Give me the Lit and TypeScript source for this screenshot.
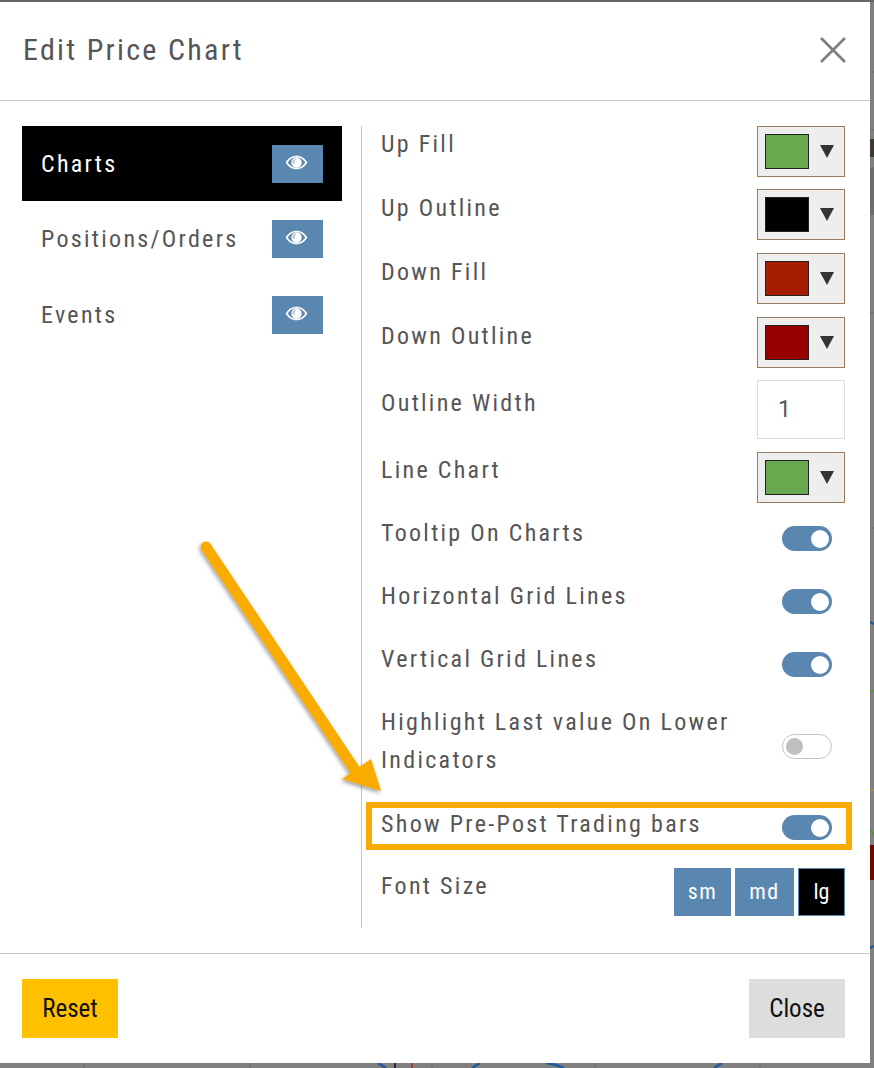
import { LitElement, html, css, svg } from "lit";
import { customElement } from "lit/decorators.js";

const eye = html`<svg class="eye" viewBox="0 0 24 16" aria-hidden="true">
  <path fill="#fff" fill-rule="evenodd" d="M12 .8C7 .8 3 3.500 .4 8 3 12.500 7 15.200 12 15.200s9-2.700 11.600-7.200C21 3.500 17 .8 12 .8zM12 2.300c-3.800 0-7 1.900-9.400 5.700 2.400 3.800 5.600 5.700 9.400 5.700s7-1.900 9.400-5.700C19 4.200 15.800 2.300 12 2.300z"/>
  <circle cx="12" cy="8" r="5.500" fill="#fff"/>
  <path fill="#9fb9d2" d="M7.800 7.800c0-2.200 1.700-3.900 4-3.900-1 1-2.200 2.200-2.200 4 0 .7.200 1.200.5 1.700-1.300 0-2.300-.7-2.300-1.800z"/>
</svg>`;

const swatch = (c: string) => html`<div class="picker"><span class="chip" style="background:${c}"></span><span class="caret"></span></div>`;
const toggle = (on = true, top = 11) => html`<span class="toggle ${on ? "on" : "off"}" style="margin-top:${top}px"><span class="knob"></span></span>`;

const rows = [
  { label: "Up Fill", h: 63, dy: -1, ctl: swatch("#6aa84f") },
  { label: "Up Outline", h: 64, dy: 0, ctl: swatch("#000000") },
  { label: "Down Fill", h: 64, dy: 0, ctl: swatch("#a61c00") },
  { label: "Down Outline", h: 63, dy: 0, ctl: swatch("#980000") },
  { label: "Outline Width", h: 72, dy: 4, ctl: html`<div class="input">1</div>` },
  { label: "Line Chart", h: 63, dy: -1, ctl: swatch("#6aa84f") },
  { label: "Tooltip On Charts", h: 63, dy: -1, ctl: toggle() },
  { label: "Horizontal Grid Lines", h: 63, dy: -1, ctl: toggle() },
  { label: "Vertical Grid Lines", h: 63, dy: -1, ctl: toggle() },
  { label: "Highlight Last value On Lower Indicators", h: 101, dy: -1, ctl: toggle(false, 30) },
  { label: "Show Pre-Post Trading bars", h: 63, dy: 0, ctl: toggle(true, 10) },
];

const bgBits = svg`
  <g stroke="#6f6f6f" stroke-width="1.500" fill="none">
    <path d="M84 1063V1068M250 1063V1068M432 1063V1068M595 1063V1068M760 1063V1068"/>
    <path d="M870 72H874M870 130H874M870 168H874M870 313H874M870 528H874"/>
  </g>
  <rect x="870" y="168" width="4" height="47" fill="#6c6c6c"/>
  <rect x="870" y="139" width="4" height="18" fill="#3c3a30"/>
  <rect x="870" y="845" width="4" height="35" fill="#6b0a04"/>
  <g fill="none" stroke-width="2.500">
    <path d="M870 622 874 624M870 948 874 946" stroke="#1d5a9c"/>
    <path d="M870 691H874M870 829 874 835" stroke="#5f8a45"/>
    <path d="M870 790H874" stroke="#c2894a" stroke-width="1.500"/>
    <path d="M378 1063 386 1068M480 1063 472 1068M546 1063 556 1065 564 1068M722 1063 714 1068" stroke="#1d5a9c"/>
    <path d="M395 1063V1068" stroke="#111" stroke-width="1.500"/>
    <path d="M412 1063V1068" stroke="#b3261e" stroke-width="1.500"/>
  </g>
`;

@customElement("app-root")
export class AppRoot extends LitElement {
  static styles = css`
    :host { display: block; width: 874px; height: 1068px; position: relative; overflow: hidden; background: #808080; font-family: "Roboto", "Liberation Sans", sans-serif; }
    * { box-sizing: border-box; }
    .bg { position: absolute; inset: 0; width: 874px; height: 1068px; }
    .topline { position: absolute; left: 0; top: 0; width: 874px; height: 2px; background: #666; }
    .modal { position: absolute; left: 0; top: 2px; width: 870px; height: 1061px; background: #fff; display: flex; flex-direction: column; }
    .head { height: 99px; flex: none; border-bottom: 1px solid #c8c8c8; display: flex; align-items: center; justify-content: space-between; padding: 0 24px 0 23px; }
    h1 { margin: 0 0 4px; font-size: 30px; font-weight: 400; letter-spacing: 2.300px; color: #555; font-stretch: 75%; }
    .x { width: 26px; height: 26px; display: block; margin-bottom: 2px; }
    .body { flex: 1; display: flex; padding: 25px 25px 25px 22px; }
    .left { width: 339px; flex: none; display: flex; flex-direction: column; }
    .tab { width: 320px; height: 75px; display: flex; align-items: center; justify-content: space-between; padding: 0 19px 0 19px; font-size: 24px; letter-spacing: 2.300px; color: #555; font-stretch: 75%; }
    .tab + .tab + .tab { margin-top: 1px; }
    .tab.active { background: #000; color: #fff; }
    .eyeb { width: 51px; height: 38px; background: #5a87b0; display: flex; align-items: flex-start; justify-content: center; padding-top: 10px; padding-right: 2px; }
    .eye { width: 23px; height: 15px; display: block; }
    .right { flex: 1; border-left: 1px solid #c4c4c4; padding-left: 19px; display: flex; flex-direction: column; }
    .row { display: flex; justify-content: space-between; align-items: flex-start; font-size: 24px; letter-spacing: 2.300px; color: #555; font-stretch: 75%; line-height: 38px; }
    .label { max-width: 372px; }
    .picker { width: 88px; height: 51px; border: 1px solid #9a7b60; background: #eee; display: flex; align-items: center; padding-left: 7px; gap: 11px; }
    .chip { width: 44px; height: 35px; border: 1px solid #222; }
    .caret { width: 0; height: 0; border-left: 7px solid transparent; border-right: 7px solid transparent; border-top: 13px solid #333; }
    .input { width: 88px; height: 59px; border: 1px solid #ddd; padding-left: 20px; line-height: 57px; color: #555; font-size: 23px; letter-spacing: 0; font-stretch: 100%; }
    .toggle { width: 50px; height: 25px; border-radius: 13px; display: block; position: relative; margin-right: 13px; flex: none; }
    .toggle.on { background: #5a87b0; }
    .toggle.off { background: #fff; border: 1px solid #c4c4c4; }
    .knob { position: absolute; width: 18px; height: 18px; border-radius: 50%; top: 3.500px; }
    .on .knob { background: #fff; right: 3px; }
    .off .knob { background: #c0c0c0; width: 17px; height: 17px; left: 3px; top: 3px; }
    .fontrow .label { margin-top: -1px; }
    .sizes { display: flex; gap: 4px; }
    .size { height: 48px; display: flex; align-items: center; justify-content: center; background: #5a87b0; color: #fff; font-size: 22px; letter-spacing: 1.500px; font-stretch: 75%; }
    .size.sm { width: 57px; }
    .size.md { width: 59px; }
    .size.lg { width: 47px; background: #000; border: 1px solid #5a87b0; letter-spacing: 0; }
    .foot { height: 110px; flex: none; border-top: 1px solid #c8c8c8; display: flex; justify-content: space-between; padding: 25px 25px 0 22px; }
    .btn { width: 96px; height: 59px; display: flex; align-items: center; justify-content: center; font-size: 25px; color: #111; font-stretch: 75%; background: #ffc000; }
    .btn.close { background: #ddd; }
    .hl { position: absolute; left: 366px; top: 802px; width: 486px; height: 48px; border: 6px solid #f9ab05; pointer-events: none; }
    .arrow { position: absolute; left: 190px; top: 530px; width: 200px; height: 270px; overflow: visible; pointer-events: none; }
  `;

  render() {
    return html`
      <svg class="bg" viewBox="0 0 874 1068">${bgBits}</svg>
      <div class="topline"></div>
      <div class="modal">
        <div class="head">
          <h1>Edit Price Chart</h1>
          <svg class="x" viewBox="0 0 26 26"><path d="M1 1 25 25M25 1 1 25" stroke="#808080" stroke-width="2.800" fill="none"/></svg>
        </div>
        <div class="body">
          <div class="left">
            <div class="tab active"><span>Charts</span><span class="eyeb">${eye}</span></div>
            <div class="tab"><span>Positions/Orders</span><span class="eyeb">${eye}</span></div>
            <div class="tab"><span>Events</span><span class="eyeb">${eye}</span></div>
          </div>
          <div class="right">
            ${rows.map((r) => html`<div class="row" style="height:${r.h}px"><span class="label" style="margin-top:${r.dy}px">${r.label}</span>${r.ctl}</div>`)}
            <div class="row fontrow"><span class="label">Font Size</span><div class="sizes"><span class="size sm">sm</span><span class="size md">md</span><span class="size lg">lg</span></div></div>
          </div>
        </div>
        <div class="foot"><div class="btn">Reset</div><div class="btn close">Close</div></div>
      </div>
      <div class="hl"></div>
      <svg class="arrow" viewBox="0 0 200 270">
        <defs><filter id="s" x="-20%" y="-20%" width="140%" height="140%"><feDropShadow dx="-1" dy="2" stdDeviation="2" flood-color="#000" flood-opacity=".4"/></filter></defs>
        <g filter="url(#s)"><path d="M16 17 165 240" stroke="#f9ab05" stroke-width="11" stroke-linecap="round" fill="none"/><path d="M153 247 182 227 192 259Z" fill="#f9ab05" transform="translate(-1 2)"/></g>
      </svg>
    `;
  }
}
